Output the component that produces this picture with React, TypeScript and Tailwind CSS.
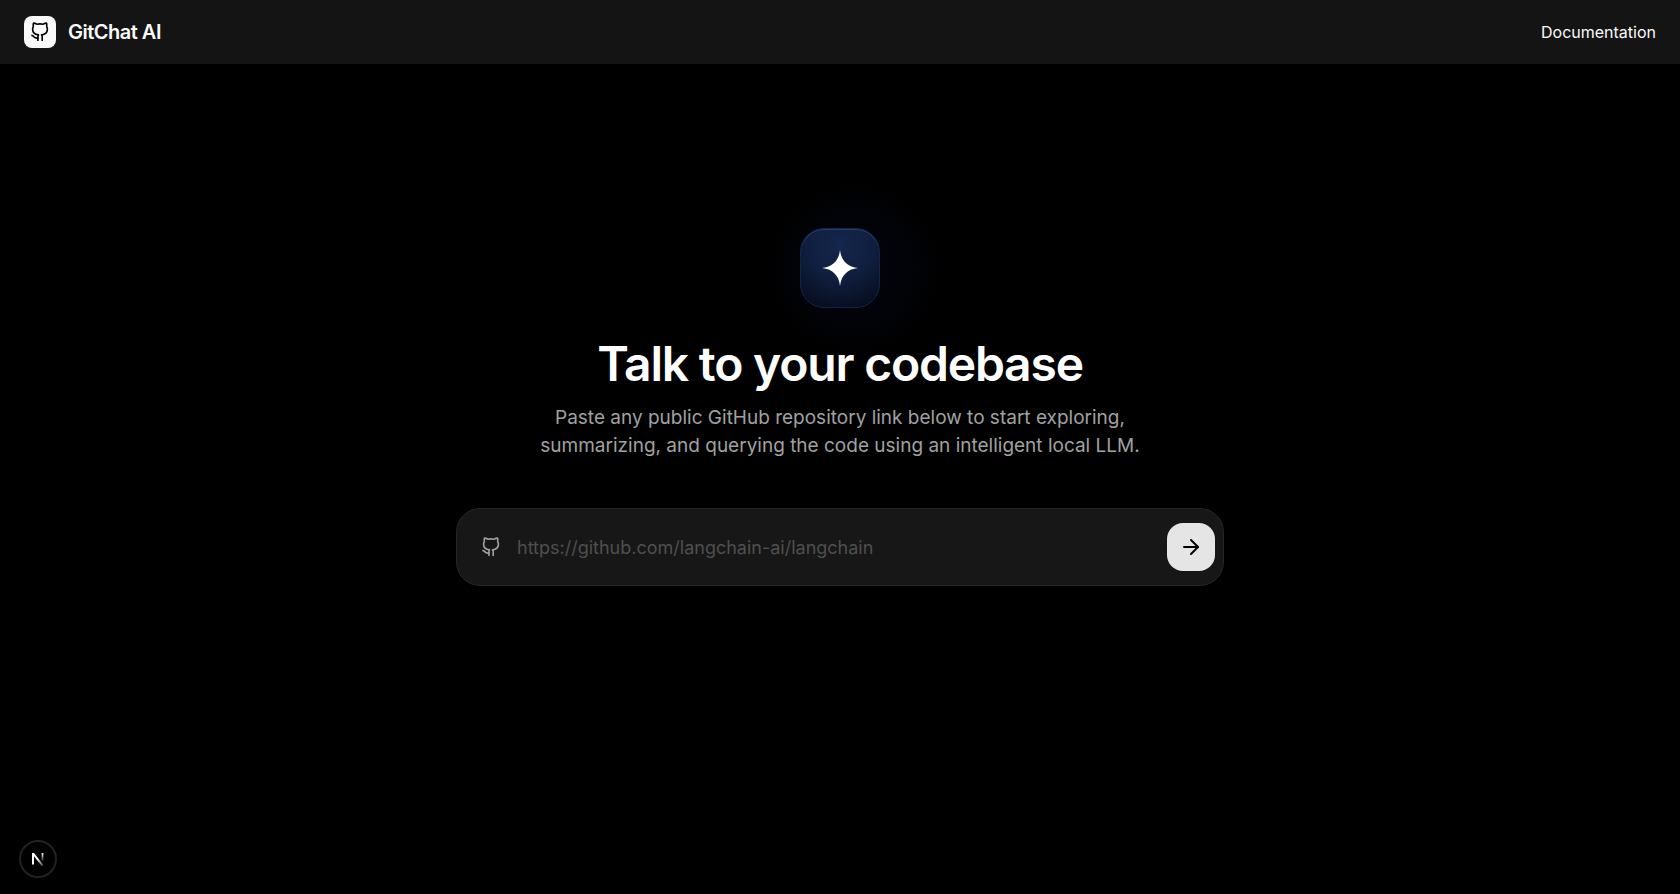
import React, { useState } from 'react';
import { ArrowRight } from 'lucide-react';

const GitCatIcon: React.FC = () => (
  <svg
    width="20"
    height="20"
    viewBox="0 0 20 20"
    fill="none"
    stroke="currentColor"
    strokeWidth="1.6"
    strokeLinecap="square"
    strokeLinejoin="round"
    aria-hidden="true"
  >
    <path d="M7.9 18.2V14.9C7.9 14 8.1 13.4 8.5 12.9C5.2 12.5 2.6 10.9 2.6 7.3C2.6 6.1 2.9 5.1 3.4 4.3C3 3.2 3.1 2.1 3.5 1.1C4.7 1.1 5.8 1.5 6.8 2.2C8.9 1.8 11.1 1.8 13.2 2.2C14.2 1.5 15.3 1.1 16.5 1.1C16.9 2.1 17 3.2 16.6 4.3C17.1 5.1 17.4 6.1 17.4 7.3C17.4 10.9 14.8 12.5 11.5 12.9C12 13.4 12.2 14 12.2 14.9V18.2" />
    <path d="M7.9 16C5.8 16.4 4.8 15.8 4 14.9C3.4 14.2 2.8 13.8 2.1 13.6" />
  </svg>
);

const Header: React.FC = () => (
  <header className="h-16 flex items-center justify-between px-6 bg-[#141414]">
    <div className="flex items-center gap-3">
      <span className="size-8 rounded-lg bg-[#fafafa] text-black flex items-center justify-center">
        <GitCatIcon />
      </span>
      <span className="text-xl font-semibold tracking-tight">GitChat AI</span>
    </div>
    <a href="#docs" className="text-base">
      Documentation
    </a>
  </header>
);

const SparkTile: React.FC = () => (
  <div className="relative size-20">
    {/* Soft glow behind the tile */}
    <div className="absolute -inset-20 rounded-full bg-[radial-gradient(circle_at_56%_50%,#030409_0%,#020308_30%,transparent_50%)]" />
    <div className="relative size-20 rounded-3xl border border-[#152348] bg-[radial-gradient(circle_at_50%_20%,#14264b_0%,#101f40_45%,#050917_100%)] shadow-[inset_0_1px_0_#24406a] flex items-center justify-center">
      <svg width="36" height="36" viewBox="0 0 36 36" fill="#fff" aria-hidden="true">
        <path d="M18 0C19 10 25 17 36 18C25 19 19 26 18 36C17 26 11 19 0 18C11 17 17 10 18 0Z" />
      </svg>
    </div>
  </div>
);

const RepoForm: React.FC = () => {
  const [url, setUrl] = useState('');

  return (
    <form
      onSubmit={(e) => e.preventDefault()}
      className="mt-12 w-full max-w-3xl flex items-center rounded-3xl border border-[#262626] bg-[#171717] py-3.5 pl-6 pr-2"
    >
      <label htmlFor="repo-url" className="text-[#a1a1a1]" aria-label="Repository link">
        <GitCatIcon />
      </label>
      <input
        id="repo-url"
        type="text"
        value={url}
        onChange={(e) => setUrl(e.target.value)}
        placeholder="https://github.com/langchain-ai/langchain"
        className="flex-1 min-w-0 h-12 px-4 bg-transparent text-lg text-white placeholder:text-[#4f4f4f] outline-none"
      />
      <button
        type="submit"
        aria-label="Start exploring"
        className="size-12 rounded-2xl bg-[#e5e5e5] text-black flex items-center justify-center cursor-pointer"
      >
        <ArrowRight size={24} />
      </button>
    </form>
  );
};

const DevBadge: React.FC = () => (
  <button
    aria-label="Open dev tools"
    className="fixed bottom-4 left-[19px] size-[38px] rounded-full border-2 border-[#222] bg-black flex items-center justify-center"
  >
    <svg width="14" height="14" viewBox="0 0 14 14" fill="none" aria-hidden="true">
      <defs>
        <linearGradient id="stem" x1="0" y1="1" x2="0" y2="10" gradientUnits="userSpaceOnUse">
          <stop stopColor="#fff" />
          <stop offset="1" stopColor="#fff" stopOpacity="0" />
        </linearGradient>
        <linearGradient id="diag" x1="7" y1="7" x2="12" y2="14" gradientUnits="userSpaceOnUse">
          <stop stopColor="#fff" />
          <stop offset="1" stopColor="#fff" stopOpacity="0.2" />
        </linearGradient>
      </defs>
      <path d="M2 12.5V1" stroke="#fff" strokeWidth="2" />
      <path d="M2 1.4L11.8 13.8" stroke="url(#diag)" strokeWidth="2" />
      <path d="M11.5 1V10" stroke="url(#stem)" strokeWidth="1.8" />
    </svg>
  </button>
);

export default function App() {
  return (
    <div className="min-h-screen bg-black text-[#fafafa] font-['Inter',sans-serif]">
      <Header />
      <main className="flex flex-col items-center px-4 pt-41 pb-36">
        <SparkTile />
        <h1 className="relative mt-8 text-5xl font-semibold tracking-tight text-white text-center">
          Talk to your codebase
        </h1>
        <p className="mt-4 max-w-2xl text-[19px] leading-7 text-[#a1a1a1] text-center">
          Paste any public GitHub repository link below to start exploring,
          <br />
          summarizing, and querying the code using an intelligent local LLM.
        </p>
        <RepoForm />
      </main>
      <DevBadge />
    </div>
  );
}
